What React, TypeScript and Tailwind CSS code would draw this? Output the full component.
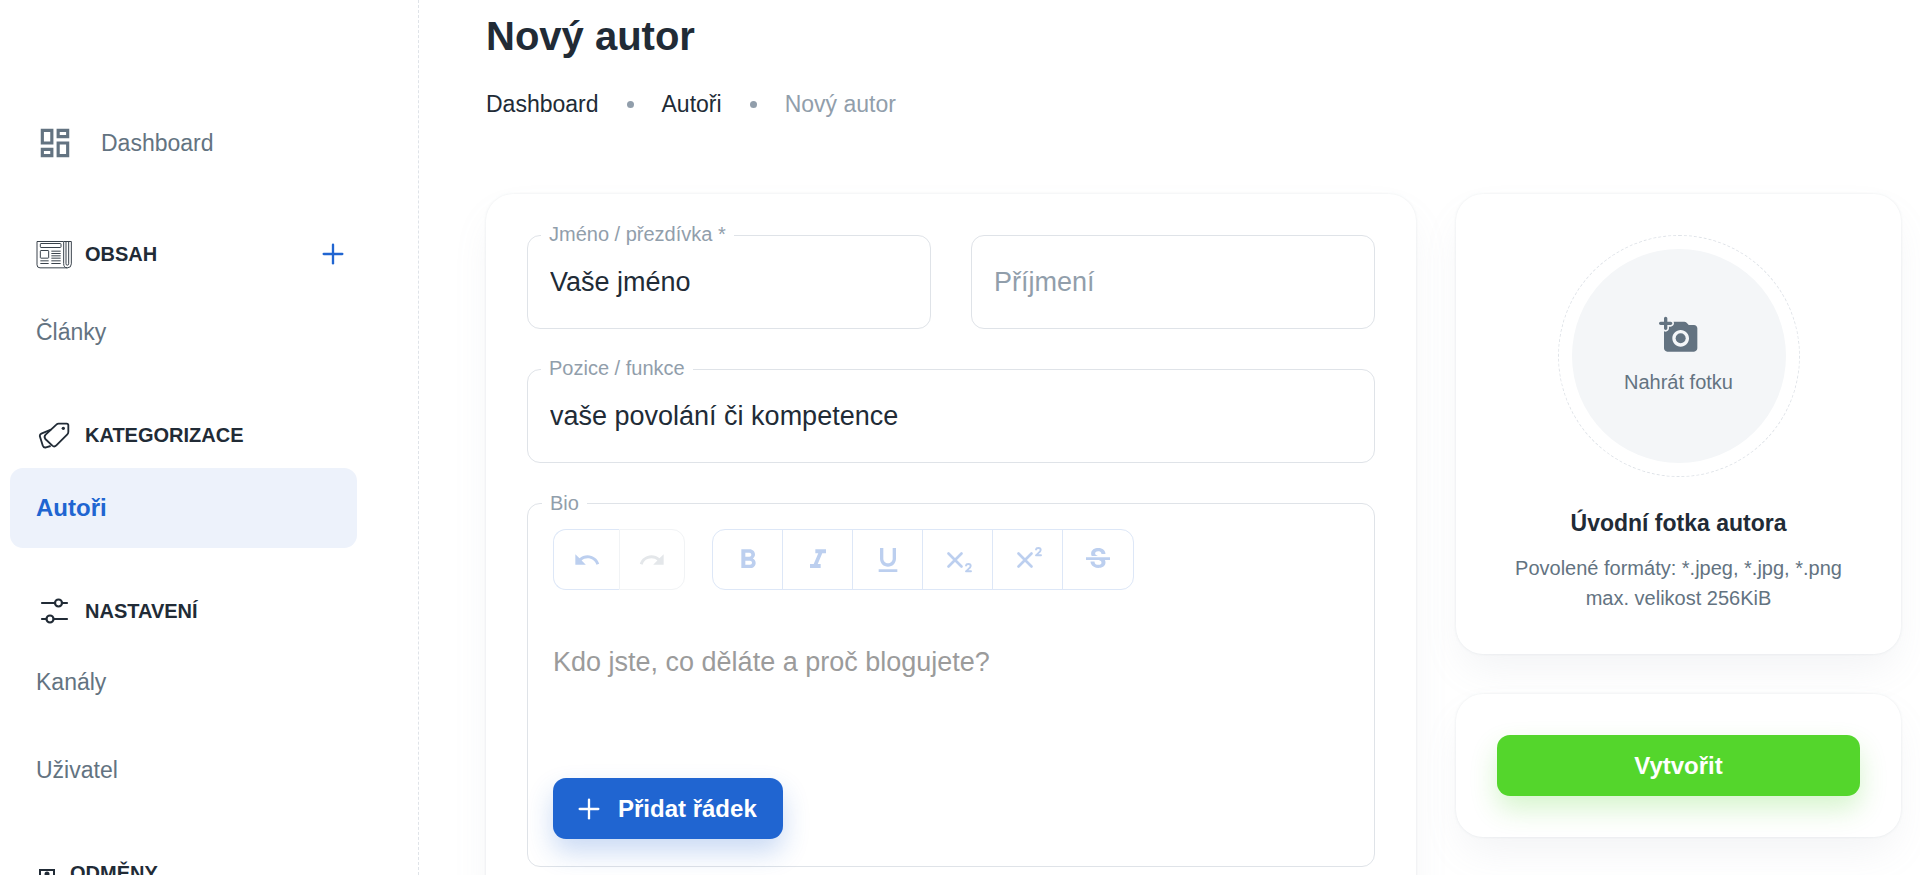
import type { ComponentType, ReactNode } from 'react';
import { Plus } from 'lucide-react';
import {
  MdFormatBold,
  MdFormatItalic,
  MdFormatUnderlined,
  MdOutlineDashboard,
  MdRedo,
  MdStrikethroughS,
  MdUndo,
} from 'react-icons/md';

function NewspaperIcon() {
  return (
    <svg viewBox="0 0 108 86" className="h-[29px] w-9" fill="none" stroke="#3a434c" strokeWidth="3">
      <path d="M3 4h80v66q0 13 11 13 12 0 12-12V4H84M3 4v70q0 9 9 9h82" />
      <path d="M90 5v66q0 4 4 4t4-4V5" />
      <rect x="13" y="10" width="62" height="12" rx="2" />
      <rect x="13" y="31" width="25" height="23" rx="2" />
      <path d="M46 33h28M46 40h28M46 47h28M46 54h28M13 62h25M46 62h28M13 70h25M46 70h28" />
    </svg>
  );
}

function TagsIcon() {
  return (
    <svg viewBox="0 0 108 84" className="h-7 w-9" fill="none" stroke="currentColor" strokeWidth="5.5" strokeLinejoin="round">
      <path d="M68 8h24q5 0 5 5v19q0 5-3 8L61 73q-6 6-12 1L28 54q-5-7 1-13L61 11q3-3 7-3z" />
      <path d="M45 26L16 38q-6 3-4 9l8 26q3 8 10 6l14-4" />
      <circle cx="82" cy="22" r="5" fill="currentColor" stroke="none" />
    </svg>
  );
}

function SlidersIcon() {
  return (
    <svg viewBox="0 0 36 28" className="h-7 w-9" fill="none" stroke="currentColor" strokeWidth="2.2" strokeLinecap="round">
      <path d="M6 6h13M26 6h5M6 22h4M18 22h13" />
      <circle cx="22.500" cy="6" r="3.500" />
      <circle cx="14" cy="22" r="3.500" />
    </svg>
  );
}

function RewardIcon() {
  return (
    <svg viewBox="0 0 24 28" className="h-7 w-6" fill="none" stroke="currentColor" strokeWidth="2">
      <path d="M4 26V11h14v15" />
      <circle cx="11" cy="15" r="2.500" fill="currentColor" stroke="none" />
      <path d="M7 24q4-8 8 0" />
    </svg>
  );
}

function SubscriptIcon({ className }: { className?: string }) {
  return (
    <svg viewBox="0 0 32 32" className={className} fill="none" stroke="currentColor" strokeLinecap="round" strokeLinejoin="round">
      <path d="M6.500 9.500l13 13M19.500 9.500l-13 13" strokeWidth="2.700" />
      <path d="M24 21.500c.3-2 4.700-2.200 4.700.4 0 2-3 3.400-4.700 5.400h5" strokeWidth="1.900" />
    </svg>
  );
}

function SuperscriptIcon({ className }: { className?: string }) {
  return (
    <svg viewBox="0 0 32 32" className={className} fill="none" stroke="currentColor" strokeLinecap="round" strokeLinejoin="round">
      <path d="M6.500 9.500l13 13M19.500 9.500l-13 13" strokeWidth="2.700" />
      <path d="M24 5.500c.3-2 4.700-2.200 4.700.4 0 2-3 3.400-4.700 5.400h5" strokeWidth="1.900" />
    </svg>
  );
}

function AddPhotoIcon() {
  return (
    <svg viewBox="0 0 24 24" className="size-10" fill="currentColor">
      <path d="M3 8c0 .55.45 1 1 1s1-.45 1-1V6h2c.55 0 1-.45 1-1s-.45-1-1-1H5V2c0-.55-.45-1-1-1s-1 .45-1 1v2H1c-.55 0-1 .45-1 1s.45 1 1 1h2v2z" />
      <circle cx="13" cy="14" r="3" />
      <path d="M21 6h-3.170l-1.240-1.350A1.990 1.990 0 0 0 15.120 4h-6.400c.17.3.28.63.28 1 0 1.100-.9 2-2 2H6v1c0 1.100-.9 2-2 2-.37 0-.7-.11-1-.28V20c0 1.100.9 2 2 2h16c1.100 0 2-.9 2-2V8c0-1.100-.9-2-2-2zm-8 13c-2.760 0-5-2.240-5-5s2.240-5 5-5 5 2.240 5 5-2.240 5-5 5z" />
    </svg>
  );
}

interface NavSection {
  title: string;
  icon: ComponentType;
  headerClass: string;
  items: string[];
  canAdd?: boolean;
}

const sections: NavSection[] = [
  { title: 'OBSAH', icon: NewspaperIcon, headerClass: 'gap-[13px] mb-[23px]', items: ['Články'], canAdd: true },
  { title: 'KATEGORIZACE', icon: TagsIcon, headerClass: 'gap-[13px] mb-[18px]', items: ['Autoři'] },
  { title: 'NASTAVENÍ', icon: SlidersIcon, headerClass: 'gap-[13px] mb-4', items: ['Kanály', 'Uživatel'] },
  { title: 'ODMĚNY', icon: RewardIcon, headerClass: 'gap-[10px] mb-4', items: [] },
];

const tools = [
  { label: 'Tučné', icon: MdFormatBold },
  { label: 'Kurzíva', icon: MdFormatItalic },
  { label: 'Podtržené', icon: MdFormatUnderlined },
  { label: 'Dolní index', icon: SubscriptIcon },
  { label: 'Horní index', icon: SuperscriptIcon },
  { label: 'Přeškrtnuté', icon: MdStrikethroughS },
];

function NavItem({ label, active }: { label: string; active?: boolean }) {
  return (
    <a
      href="#"
      className={`flex h-20 items-center rounded-[13px] px-[26px] ${
        active ? 'bg-[#edf2fb] text-2xl font-bold text-[#2065d1]' : 'text-[23px] text-[#637381]'
      }`}
    >
      {label}
    </a>
  );
}

function Sidebar() {
  return (
    <nav className="w-[419px] shrink-0 border-r border-dashed border-[#dfe3e8] pt-[103px] pr-[61px] pl-[10px]">
      <a href="#" className="flex h-20 items-center gap-[27px] px-[26px] text-[23px] text-[#637381]">
        <MdOutlineDashboard className="size-[38px]" />
        Dashboard
      </a>
      <div className="mt-14 space-y-12">
        {sections.map((section) => (
          <section key={section.title}>
            <div className={`flex h-[30px] items-center pr-2 pl-[26px] text-[#212b36] ${section.headerClass}`}>
              <section.icon />
              <h2 className="flex-1 text-xl font-bold">{section.title}</h2>
              {section.canAdd && (
                <button type="button" aria-label="Přidat článek" className="text-[#2065d1]">
                  <Plus className="size-8" strokeWidth={1.75} />
                </button>
              )}
            </div>
            <div className="space-y-2">
              {section.items.map((item) => (
                <NavItem key={item} label={item} active={item === 'Autoři'} />
              ))}
            </div>
          </section>
        ))}
      </div>
    </nav>
  );
}

function Card({ children, className }: { children: ReactNode; className: string }) {
  return (
    <section
      className={`rounded-[27px] bg-white shadow-[0_0_3px_rgba(145,158,171,0.2),0_20px_40px_-7px_rgba(145,158,171,0.12)] ${className}`}
    >
      {children}
    </section>
  );
}

function FieldLabel({ htmlFor, children }: { htmlFor: string; children: ReactNode }) {
  return (
    <label htmlFor={htmlFor} className="absolute -top-4 left-[14px] bg-white px-2 text-xl leading-[30px] text-[#919eab]">
      {children}
    </label>
  );
}

interface TextFieldProps {
  id: string;
  label: string;
  defaultValue?: string;
}

function TextField({ id, label, defaultValue }: TextFieldProps) {
  return (
    <div className="relative">
      <input
        id={id}
        type="text"
        defaultValue={defaultValue}
        placeholder={defaultValue ? undefined : label}
        aria-label={label}
        className="block h-[94px] w-full rounded-[13px] border border-[#dfe3e8] px-[22px] text-[27px] text-[#212b36] outline-none placeholder:text-[#919eab]"
      />
      {defaultValue && <FieldLabel htmlFor={id}>{label}</FieldLabel>}
    </div>
  );
}

function Toolbar() {
  return (
    <div className="flex gap-[27px] text-[#bccfef]">
      <div className="flex">
        <button
          type="button"
          aria-label="Zpět"
          className="flex h-[61px] w-[66px] items-center justify-center rounded-l-[13px] border border-r-0 border-[#dde7f7]"
        >
          <MdUndo className="size-7" />
        </button>
        <button
          type="button"
          aria-label="Znovu"
          className="flex h-[61px] w-[66px] items-center justify-center rounded-r-[13px] border border-[#f1f3f5] text-[#e4e7ea]"
        >
          <MdRedo className="size-7" />
        </button>
      </div>
      <div className="flex divide-x divide-[#dde7f7] rounded-[13px] border border-[#dde7f7]">
        {tools.map((tool) => (
          <button
            key={tool.label}
            type="button"
            aria-label={tool.label}
            className="flex w-[70px] items-center justify-center"
          >
            <tool.icon className="size-8" />
          </button>
        ))}
      </div>
    </div>
  );
}

function BioEditor() {
  return (
    <div className="relative rounded-[13px] border border-[#dfe3e8] px-[25px] pt-[25px] pb-[27px]">
      <FieldLabel htmlFor="bio">Bio</FieldLabel>
      <Toolbar />
      <textarea
        id="bio"
        rows={3}
        placeholder="Kdo jste, co děláte a proč blogujete?"
        className="mt-[52px] mb-4 block w-full resize-none text-[27px] leading-10 text-[#212b36] outline-none placeholder:text-[#9b9b9b]"
      />
      <button
        type="button"
        className="flex h-[61px] items-center gap-[13px] rounded-[13px] bg-[#2065d1] pr-[26px] pl-5 text-2xl font-bold text-white shadow-[0_13px_27px_rgba(32,101,209,0.24)]"
      >
        <Plus className="size-8" strokeWidth={1.75} />
        Přidat řádek
      </button>
    </div>
  );
}

export default function App() {
  return (
    <div className="flex h-screen overflow-hidden bg-white font-['Liberation_Sans',Arial,sans-serif]">
      <Sidebar />
      <main className="min-w-0 flex-1 pt-[6px] pr-[19px] pl-[67px]">
        <h1 className="text-[40px] leading-[60px] font-bold text-[#212b36]">Nový autor</h1>
        <nav className="mt-5 flex items-center gap-7 text-[23px] leading-9 text-[#212b36]">
          <a href="#">Dashboard</a>
          <span className="size-[7px] rounded-full bg-[#919eab]" />
          <a href="#">Autoři</a>
          <span className="size-[7px] rounded-full bg-[#919eab]" />
          <span className="text-[#919eab]">Nový autor</span>
        </nav>

        <form className="mt-[72px] grid grid-cols-3 items-start gap-10">
          <Card className="col-span-2 space-y-10 p-[41px]">
            <div className="grid grid-cols-2 gap-10">
              <TextField id="firstName" label="Jméno / přezdívka *" defaultValue="Vaše jméno" />
              <TextField id="lastName" label="Příjmení" />
            </div>
            <TextField id="position" label="Pozice / funkce" defaultValue="vaše povolání či kompetence" />
            <BioEditor />
          </Card>

          <div className="space-y-10">
            <Card className="flex flex-col items-center p-[41px] text-center">
              <div className="size-[242px] rounded-full border border-dashed border-[#dfe3e8] p-[13px]">
                <button
                  type="button"
                  className="flex size-full flex-col items-center justify-center gap-3 rounded-full bg-[#f4f6f8] text-xl leading-[30px] text-[#637381]"
                >
                  <AddPhotoIcon />
                  Nahrát fotku
                </button>
              </div>
              <h2 className="mt-7 text-[23px] leading-9 font-bold text-[#212b36]">Úvodní fotka autora</h2>
              <p className="mt-3 text-xl leading-[30px] text-[#637381]">
                Povolené formáty: *.jpeg, *.jpg, *.png
                <br />
                max. velikost 256KiB
              </p>
            </Card>
            <Card className="p-[41px]">
              <button
                type="submit"
                className="block h-[61px] w-full rounded-[13px] bg-[#54d62c] text-2xl font-bold text-white shadow-[0_13px_27px_rgba(84,214,44,0.24)]"
              >
                Vytvořit
              </button>
            </Card>
          </div>
        </form>
      </main>
    </div>
  );
}
